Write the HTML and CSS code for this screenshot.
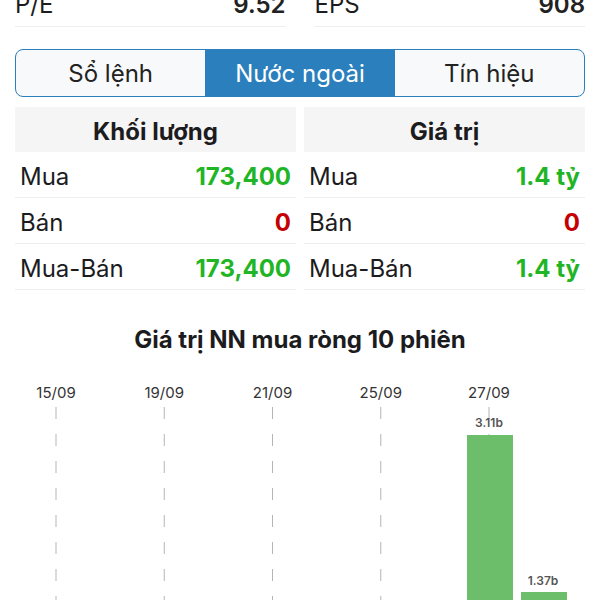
FILE: index.html
```html
<!DOCTYPE html>
<html lang="vi">
<head>
<meta charset="utf-8">
<title>Nước ngoài</title>
<link rel="stylesheet" href="styles.css">
</head>
<body>
<div class="page">
  <div class="stats">
    <div class="stat"><span class="stat-label">P/E</span><span class="stat-value">9.52</span></div>
    <div class="stat"><span class="stat-label">EPS</span><span class="stat-value">908</span></div>
  </div>

  <div class="tabs">
    <div class="tab">Sổ lệnh</div>
    <div class="tab active">Nước ngoài</div>
    <div class="tab">Tín hiệu</div>
  </div>

  <div class="tables">
    <div class="table">
      <div class="table-head">Khối lượng</div>
      <div class="row"><span>Mua</span><span class="num up">173,400</span></div>
      <div class="row"><span>Bán</span><span class="num down">0</span></div>
      <div class="row"><span>Mua-Bán</span><span class="num up">173,400</span></div>
    </div>
    <div class="table">
      <div class="table-head">Giá trị</div>
      <div class="row"><span>Mua</span><span class="num up">1.4 tỷ</span></div>
      <div class="row"><span>Bán</span><span class="num down">0</span></div>
      <div class="row"><span>Mua-Bán</span><span class="num up">1.4 tỷ</span></div>
    </div>
  </div>

  <h2 class="chart-title">Giá trị NN mua ròng 10 phiên</h2>

  <svg class="chart" width="570" height="380" viewBox="0 0 570 380">
    <g class="dates">
      <text x="41" y="38">15/09</text>
      <text x="149.25" y="38">19/09</text>
      <text x="257.5" y="38">21/09</text>
      <text x="365.75" y="38">25/09</text>
      <text x="474" y="38">27/09</text>
    </g>
    <g class="grid">
      <line x1="41" y1="47" x2="41" y2="356"/>
      <line x1="149.25" y1="47" x2="149.25" y2="356"/>
      <line x1="257.5" y1="47" x2="257.5" y2="356"/>
      <line x1="365.75" y1="47" x2="365.75" y2="356"/>
      <line x1="474" y1="47" x2="474" y2="356"/>
    </g>
    <g class="bars">
      <rect x="452" y="75" width="46" height="281"/>
      <rect x="506" y="232" width="46" height="124"/>
    </g>
    <g class="values">
      <text x="474" y="67">3.11b</text>
      <text x="528" y="225">1.37b</text>
    </g>
  </svg>
</div>
</body>
</html>
```

FILE: styles.css
```css
html, body {
  margin: 0;
  padding: 0;
  background: #ffffff;
  overflow: hidden;
  height: 600px;
}

body {
  font-family: "Inter", "Roboto", "Liberation Sans", sans-serif;
  color: #1c1c1e;
}

.page {
  padding: 0 15px;
  margin-top: -18px;
}

.stats {
  display: grid;
  grid-template-columns: 1fr 1fr;
  column-gap: 29px;
}

.stat {
  display: flex;
  justify-content: space-between;
  align-items: center;
  height: 44px;
  border-bottom: 1px solid #eeeeee;
  font-size: 24px;
}

.stat-value {
  font-weight: 600;
  color: #222;
}

.tabs {
  display: flex;
  margin-top: 22px;
  height: 48px;
  box-sizing: border-box;
  border: 1.5px solid #2c7fbd;
  border-radius: 8px;
  overflow: hidden;
  background: #f8f9fa;
}

.tab {
  flex: 1;
  display: flex;
  align-items: center;
  justify-content: center;
  font-size: 24px;
  color: #222;
}

.tab.active {
  background: #2c7fbd;
  color: #ffffff;
}

.tables {
  display: grid;
  grid-template-columns: 1fr 1fr;
  column-gap: 8px;
  margin-top: 10px;
}

.table-head {
  height: 45px;
  box-sizing: border-box;
  padding-top: 3px;
  display: flex;
  align-items: center;
  justify-content: center;
  background: #f5f5f5;
  font-weight: 700;
  font-size: 24px;
  color: #1c1c1e;
}

.row {
  height: 45px;
  display: flex;
  align-items: center;
  justify-content: space-between;
  padding: 0 5px;
  border-bottom: 1px solid #eeeeee;
  font-size: 24px;
}

.row span {
  padding-top: 3px;
}

.num {
  font-weight: 700;
}

.num.up {
  color: #1fb525;
}

.num.down {
  color: #c40000;
}

.chart-title {
  margin: 36px 0 0;
  line-height: 28px;
  font-size: 24px;
  font-weight: 700;
  text-align: center;
  color: #1c1c1e;
}

.chart {
  display: block;
  margin-top: 6px;
}

.dates text {
  font-size: 15px;
  fill: #333;
  text-anchor: middle;
}

.grid line {
  stroke: #b5b5b5;
  stroke-width: 1;
  stroke-dasharray: 12 15;
}

.bars rect {
  fill: #6cbe6a;
}

.values text {
  font-size: 12px;
  font-weight: 600;
  fill: #555;
  text-anchor: middle;
}
```
